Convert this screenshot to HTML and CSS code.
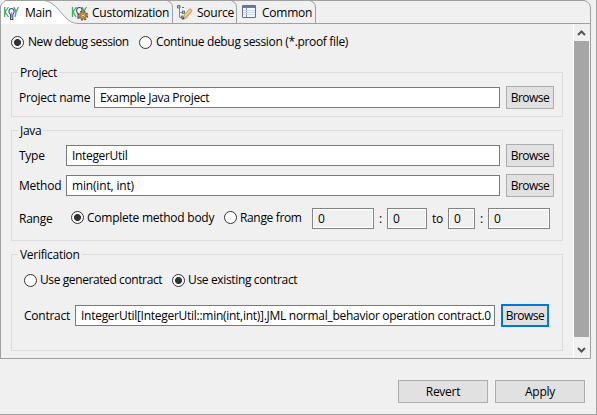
FILE: index.html
```
<!DOCTYPE html>
<html lang="en">
<head>
<meta charset="utf-8">
<title>Debug configuration</title>
<link rel="stylesheet" href="styles.css">
</head>
<body>
<main class="window">
  <section class="panel">
    <nav class="tabs">
      <svg class="tab-frame" width="591" height="24" viewBox="0 0 591 24">
        <path d="M1 24V6L2 4L4 2L6 1H44C49 1 53 4 57 8L66 18C69 21 73 23 78 24Z" fill="#fff"/>
        <g fill="none" stroke="#a0a0a0">
          <path d="M.5 24V6L2 3.500L4 1.500L6 .5H584L587 1.500L589.500 4L590.500 7V24"/>
          <path d="M44 .5C49 1 53 4 57 8L66 18C69 21 73 23.500 78 23.500H590"/>
          <path d="M167 .5L170 2L172 4.500L172.500 7V23M231 .5L234 2L236 4.500L236.500 7V23M310 .5L313 2L315 4.500L315.500 7V23"/>
        </g>
      </svg>
      <div class="tab tab-main">
        <svg class="icon" width="16" height="16" viewBox="0 0 16 16" fill="none">
          <path d="M.7 2V12M4.500 2L1 7L4.500 12M10 2L12 7L14.500 2M12 7L11 12" stroke="#35b558" stroke-width="1.300"/>
          <path d="M6.500 9.500C4 8 4.500 3.500 7.500 3.500S11 8 8.800 9.500V14.500H6.500Z" fill="#f2f2fc" stroke="#42438a" stroke-width="1.100"/>
          <path d="M7.600 7V13" stroke="#7b7cb4" stroke-width=".8"/>
        </svg>
        <span>Main</span>
      </div>
      <div class="tab tab-custom">
        <svg class="icon" width="17" height="16" viewBox="0 0 17 16" fill="none">
          <path d="M1.500 2V12M5.500 2L2 7L5 12M11 2L13 6L15.500 2" stroke="#35b558" stroke-width="1.300"/>
          <path d="M7 9C5 7 5 2.500 8.300 2.500S11.500 6 10.500 7M7 9V14" stroke="#42438a" stroke-width="1.100"/>
          <circle cx="12" cy="10.500" r="4.300" stroke="#704214" stroke-width="1.600" stroke-dasharray="1.900 1.477"/>
          <circle cx="12" cy="10.500" r="2.900" fill="#fff3d8" stroke="#b57a32" stroke-width="2"/>
          <circle cx="12" cy="10.500" r="1.300" fill="#fff" stroke="#704214" stroke-width=".7"/>
        </svg>
        <span>Customization</span>
      </div>
      <div class="tab tab-source">
        <svg class="icon" width="16" height="16" viewBox="0 0 16 16" fill="none">
          <path d="M2.500 3V12.500H5M2.500 7.500H5" stroke="#6f8db8"/>
          <path d="M.5 .5H3V3H.5ZM5 2.500H7M5.500 6H7.500V8.500H5.500ZM4.500 11H6V13.500H4.500Z" fill="#b6cae6" stroke="#4d70a6"/>
          <path d="M5.500 14.500L7 10.500L12.500 4L15 6L9.500 12.800Z" fill="#f0b466" stroke="#c98435" stroke-width=".7"/>
          <path d="M12.500 4L13.500 3L15.500 5L15 6Z" fill="#eba1a1"/>
          <path d="M5.500 14.500L6.200 12.200L7.600 13.500Z" fill="#303030"/>
          <path d="M8 11L13.300 5" stroke="#ffe0a4"/>
        </svg>
        <span>Source</span>
      </div>
      <div class="tab tab-common">
        <svg class="icon" width="15" height="14" viewBox="0 0 15 14" fill="none">
          <path d="M.5 .5H13.500V12.500H.5Z" fill="#f5faff" stroke="#5f7199"/>
          <path d="M1 1H13V3H1Z" fill="#657ba8"/>
          <path d="M4.500 3V12" stroke="#7990b5"/>
          <path d="M1 5.500H13M1 7.500H13M1 9.500H13" stroke="#ccdaec"/>
        </svg>
        <span>Common</span>
      </div>
    </nav>
    <div class="panel-body">
      <div class="form">
        <div class="radios session">
          <span class="radio on"></span><span class="new-label">New debug session</span>
          <span class="radio"></span><span class="continue-label">Continue debug session (*.proof file)</span>
        </div>
        <section class="group project">
          <h2>Project</h2>
          <div class="row">
            <span class="label project-label">Project name</span>
            <div class="field">Example Java Project</div>
            <button>Browse</button>
          </div>
        </section>
        <section class="group java">
          <h2>Java</h2>
          <div class="row">
            <span class="label">Type</span>
            <div class="field">IntegerUtil</div>
            <button>Browse</button>
          </div>
          <div class="row">
            <span class="label">Method</span>
            <div class="field method-field">min(int, int)</div>
            <button>Browse</button>
          </div>
          <div class="row range">
            <span class="label range-label">Range</span>
            <span class="radio on"></span><span class="body-label">Complete method body</span>
            <span class="radio"></span><span class="from-label">Range from</span>
            <div class="field disabled wide">0</div><span class="sep">:</span>
            <div class="field disabled medium">0</div><span class="sep to">to</span>
            <div class="field disabled narrow">0</div><span class="sep">:</span>
            <div class="field disabled wide">0</div>
          </div>
        </section>
        <section class="group verification">
          <h2>Verification</h2>
          <div class="radios contract-kind">
            <span class="radio"></span><span class="generated-label">Use generated contract</span>
            <span class="radio on"></span><span class="existing-label">Use existing contract</span>
          </div>
          <div class="row contract">
            <span class="label">Contract</span>
            <div class="field contract-field">IntegerUtil[IntegerUtil::min(int,int)].JML normal_behavior operation contract.0</div>
            <button class="focused">Browse</button>
          </div>
        </section>
      </div>
      <div class="scrollbar">
        <svg width="15" height="17" viewBox="0 0 15 17"><path d="M4 11L7.500 7.500L11 11" fill="none" stroke="#555" stroke-width="2"/></svg>
        <div class="thumb"></div>
        <svg width="15" height="21" viewBox="0 0 15 21"><path d="M4 11L7.500 14.500L11 11" fill="none" stroke="#555" stroke-width="2"/></svg>
      </div>
    </div>
  </section>
  <footer class="actions"><button>Revert</button><button>Apply</button></footer>
</main>
</body>
</html>
```
FILE: styles.css
```
* { box-sizing: border-box; }
body {
  margin: 0;
  font: 12px/16px "Open Sans", "Noto Sans", sans-serif;
  letter-spacing: -0.25px;
  color: #000;
  background: #f0f0f0;
  white-space: nowrap;
}
.window {
  width: 597px;
  height: 415px;
  border-right: 1px solid #a0a0a0;
  border-bottom: 1px solid #a0a0a0;
}
.panel { width: 591px; height: 359px; display: flex; flex-direction: column; }
.tabs { height: 24px; position: relative; display: flex; }
.tab-frame { position: absolute; left: 0; top: 0; }
.tab { position: relative; display: flex; align-items: flex-start; }
.tab span { margin-top: 5px; }
.icon { flex: none; margin: 5px 5px 0 0; }
.tab-main { width: 68px; padding-left: 4px; }
.tab-custom { width: 105px; padding-left: 3px; }
.tab-custom .icon { margin-right: 4px; }
.tab-source { width: 64px; padding-left: 4px; }
.tab-source .icon { margin-right: 4px; }
.tab-common { padding-left: 5px; }
.panel-body {
  height: 335px;
  display: flex;
  border: solid #a0a0a0;
  border-width: 0 1px 1px;
}
.form { width: 572px; padding: 10px 10px 0; }
.radios { display: flex; align-items: center; height: 16px; }
.radio {
  width: 13px;
  height: 13px;
  flex: none;
  border: 1px solid #333;
  border-radius: 50%;
  background: #fff;
}
.radio.on { background: radial-gradient(circle, #333 3.1px, #fff 3.9px); }
.radio + span { margin-left: 3px; }
.session .radio + span { margin-left: 4px; }
.new-label { width: 111px; letter-spacing: -0.43px; }
.continue-label { letter-spacing: -0.34px; }
.group { border: 1px solid #dcdcdc; padding: 0 8px; }
.group h2 {
  width: max-content;
  height: 16px;
  margin: -8px 0 0 -2px;
  padding: 0 2px;
  font: inherit;
  letter-spacing: -0.3px;
  background: #f0f0f0;
}
.project { height: 45px; margin-top: 22px; }
.java { height: 111px; margin-top: 13px; }
.verification { height: 97px; margin-top: 13px; }
.row { display: flex; align-items: center; height: 23px; }
.project .row, .java h2 + .row { margin-top: 5px; }
.java .row + .row { margin-top: 7px; }
.java .row.range { height: 21px; margin-top: 11px; }
.label { width: 47px; margin-left: -1px; flex: none; }
.project-label { width: 75px; }
.field {
  height: 21px;
  flex: 1;
  min-width: 0;
  padding: 2px 5px;
  line-height: 15px;
  letter-spacing: -0.33px;
  border: 1px solid #7a7a7a;
  background: #fff;
}
.method-field { letter-spacing: -0.17px; }
.field.disabled { background: #f0f0f0; border-color: #848484; box-shadow: inset 0 0 0 1px #fff; flex: none; }
.wide { width: 62px; }
.medium { width: 40px; }
.narrow { width: 27px; }
.sep { width: 13px; text-align: center; }
.to { width: 21px; }
button {
  width: 48px;
  height: 23px;
  flex: none;
  margin-left: 6px;
  padding: 0;
  border: 1px solid #adadad;
  background: #e1e1e1;
  color: #000;
  font: inherit;
  letter-spacing: -0.5px;
}
.range-label { width: 52px; }
.body-label { width: 137px; }
.range .radio,
.range .radio + span { margin-bottom: 2px; }
.from-label { width: 72px; letter-spacing: -0.35px; }
.contract-kind { margin: 9px 0 0 4px; }
.generated-label { width: 132px; letter-spacing: -0.4px; }
.existing-label { letter-spacing: -0.35px; }
.contract { margin: 16px 5px 0 4px; }
.contract .label { width: 51px; margin-left: 0; }
.contract-field { letter-spacing: -0.275px; }
.contract .focused { border: 2px solid #0078d7; }
.scrollbar { width: 16px; border-left: 1px solid #fff; display: flex; flex-direction: column; }
.scrollbar svg { display: block; }
.thumb { flex: 1; background: #a6a6a6; }
.actions { display: flex; justify-content: flex-end; padding: 21px 11px 0 0; }
.actions button { width: 90px; margin-left: 7px; letter-spacing: -0.25px; }
```
